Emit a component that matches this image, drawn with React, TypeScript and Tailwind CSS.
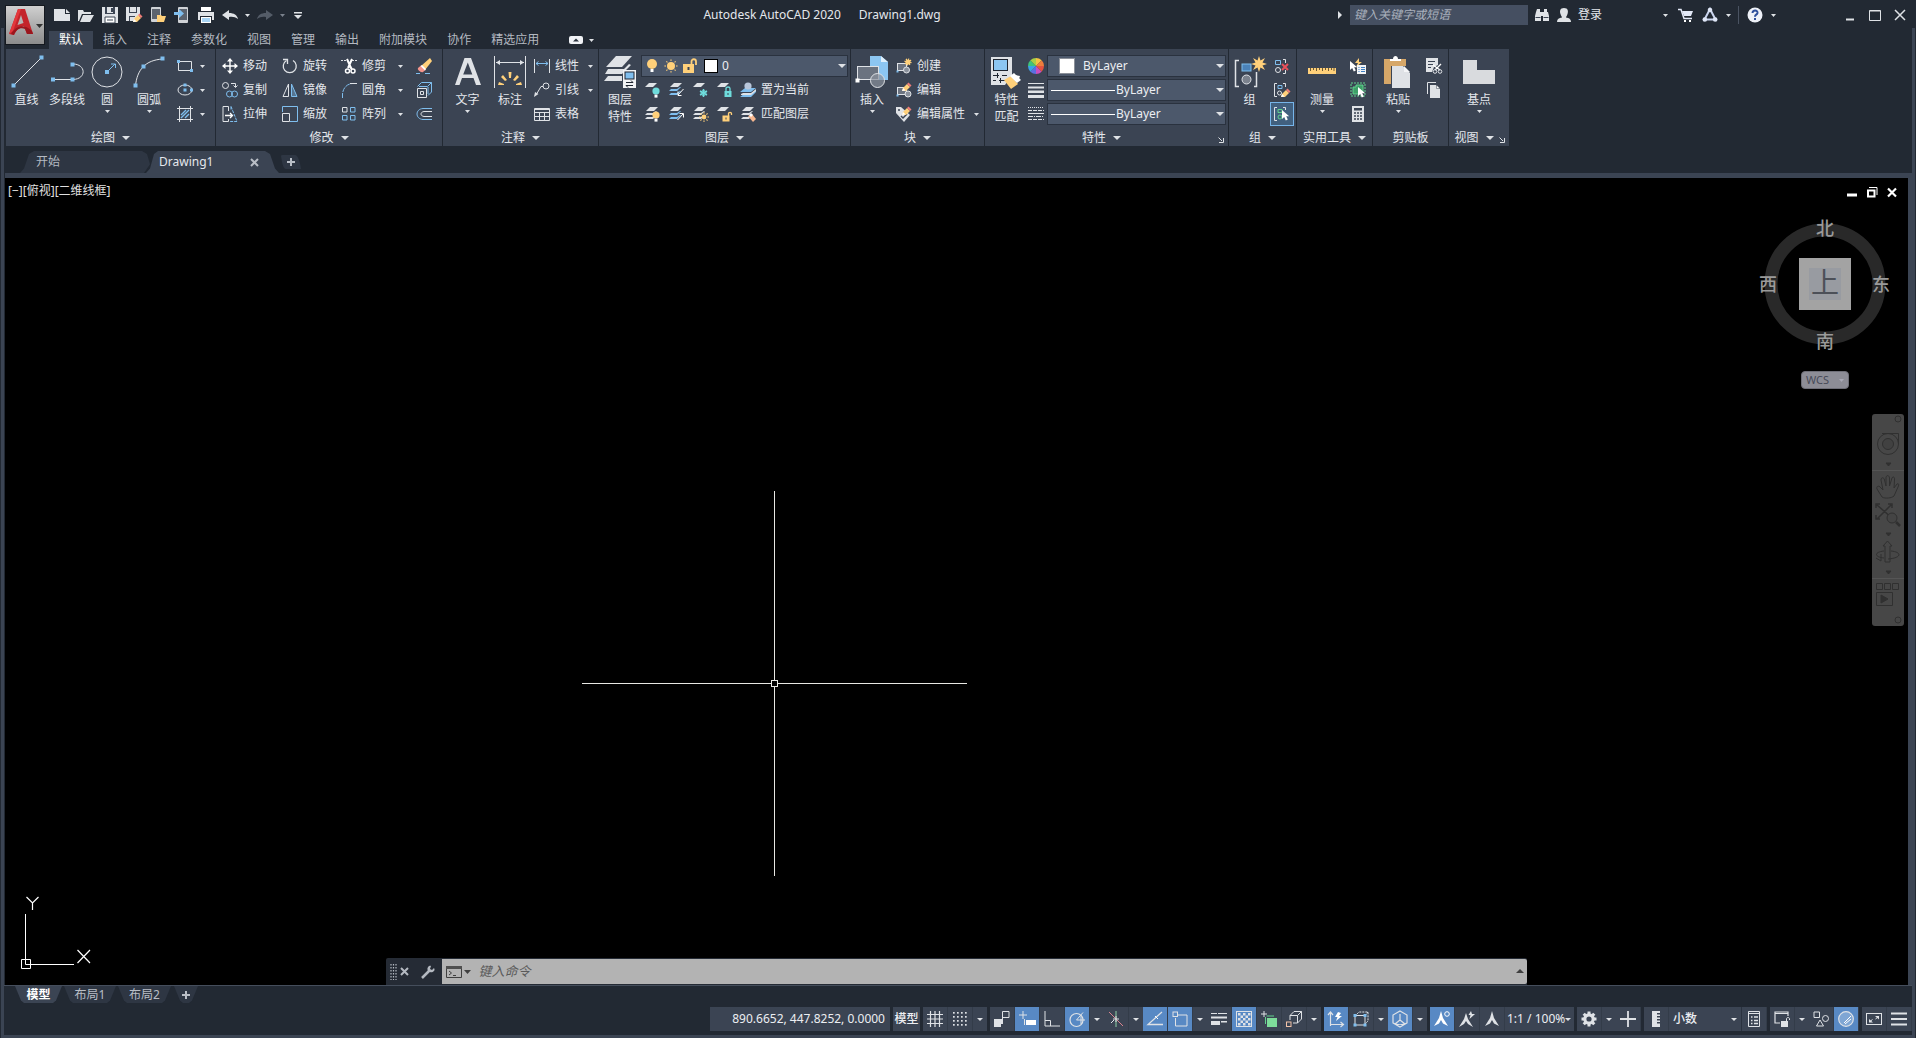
import React from "react";
import type { ReactNode } from "react";

const W = "#dfe2e6";
const B = "#7fbeee";
const Y = "#ffd07a";
const G = "#62d38f";
const T = "#6fdcdc";
const N = "#3b4453";

const dot = (x: number, y: number, s = 3, c = B) => (
  <rect x={x - s / 2} y={y - s / 2} width={s} height={s} fill={c} stroke="none" />
);

const sheet = (y: number, c = W) => <path d={`M1 ${y + 4} L5 ${y} H13 L9 ${y + 4} Z`} fill={c} stroke="none" />;
const layer3 = (c1 = W, c2 = W, c3 = W) => (
  <g stroke="none">
    <path d="M2 5 L6 1 H14 L10 5 Z" fill={c1} />
    <path d="M1 9 L3 7 H9 L12 5 L13 5 L9 9 Z" fill={c2} />
    <path d="M1 13 L3 11 H9 L12 9 L13 9 L9 13 Z" fill={c3} />
  </g>
);
const bulb = (x: number, y: number, r: number, c: string) => (
  <g stroke="none">
    <circle cx={x} cy={y} r={r} fill={c} />
    <rect x={x - 1.5} y={y + r} width="3" height="3" fill="#fff" />
  </g>
);
const cursor = (x: number, y: number) => (
  <path
    d={`M${x} ${y} v9 l2.2 -2 l1.6 3.6 l2 -1 l-1.6 -3.4 h3 Z`}
    fill="#fff"
    stroke="none"
  />
);
const pencil = (x: number, y: number) => (
  <g stroke="none" transform={`translate(${x} ${y})`}>
    <path d="M0 8 L1 5 L5 1 L8 4 L4 8 Z" fill={Y} />
    <path d="M5 1 L6.5 -0.5 L9.5 2.5 L8 4 Z" fill="#ef7c78" />
    <path d="M0 8 L1 5 L3.6 7.6 Z" fill="#fff" />
  </g>
);
const sun = (x: number, y: number, r: number) => (
  <g stroke={Y} strokeWidth="1">
    <circle cx={x} cy={y} r={r} fill={Y} stroke="none" />
    {[0, 45, 90, 135, 180, 225, 270, 315].map((a) => (
      <path key={a} transform={`rotate(${a} ${x} ${y})`} d={`M${x} ${y - r - 1} V${y - r - 2.6}`} />
    ))}
  </g>
);

const icons: Record<string, ReactNode> = {
  /* quick access */
  new: <path d="M0 2 H11 V7 H16 V14 H0 Z M12 2 L16 6 H12 Z" fill={W} stroke="none" />,
  open: <path d="M0 14 V3 H5 L6 5 H13 V7 H4 L1 14 Z M5 8 H16 L12 15 H2 Z" fill={W} stroke="none" />,
  save: (
    <g stroke="none">
      <path d="M0 0 H16 V16 H0 Z" fill={W} />
      <path d="M3 0 H5 V6 H11 V0 H13 V7 H3 Z" fill={N} />
      <rect x="9" y="1" width="2" height="4" fill={N} />
      <path d="M3 10 H13 V16 H3 Z" fill="#fff" stroke={N} />
      <path d="M5 13 H11" stroke={N} />
    </g>
  ),
  saveas: (
    <g stroke="none">
      <path d="M0 0 H14 V9 L8 14 H0 Z" fill={W} />
      <path d="M3 0 H4 V5 H10 V0 H11 V6 H3 Z M3 9 h6 v1 h-5 v4 h-1 Z" fill={N} />
      {pencil(7, 7)}
    </g>
  ),
  mobile: (
    <g stroke="none">
      <rect x="1" y="0" width="10" height="15" rx="1" fill="#cfd2d6" />
      <rect x="2" y="2" width="8" height="10" fill="#5c636e" />
      <path d="M7 8 h4 l1 1 h4 l-2 6 h-7 Z" fill={Y} />
    </g>
  ),
  send: (
    <g stroke="none">
      <rect x="4" y="0" width="10" height="16" rx="1" fill="#cfd2d6" />
      <rect x="5" y="2" width="8" height="11" fill="#5c636e" />
      <path d="M0 5 H5 V2 L10 6.5 L5 11 V8 H0 Z" fill={B} />
    </g>
  ),
  print: (
    <g stroke="none">
      <rect x="3" y="0" width="10" height="4" fill="#fff" />
      <path d="M0 5 H16 V13 H14 V9 H2 V13 H0 Z" fill={W} />
      <rect x="3" y="10" width="10" height="6" fill="#fff" />
      <rect x="4" y="11" width="8" height="4" fill="#a8d4f5" />
    </g>
  ),
  undo: <path d="M0 8 L7 3 V6 C12 6 15 8 16 12 C13 10 11 9.5 7 10 V13 Z" fill={W} stroke="none" />,
  redo: <path d="M16 8 L9 3 V6 C4 6 1 8 0 12 C3 10 5 9.5 9 10 V13 Z" fill="#545c68" stroke="none" />,
  custom: <path d="M4 5 H12 V6.5 H4 Z M4 8 H12 L8 12 Z" fill={W} stroke="none" />,
  /* draw */
  line: (
    <>
      <path d="M3 29 L31 1" />
      {dot(2.5, 29.5, 4)}
      {dot(30.5, 1.5, 4)}
    </>
  ),
  pline: (
    <>
      <path d="M2 23.5 H22 C36 23 35 8 22 8" />
      {dot(2, 23.5, 4)}
      {dot(21.5, 23.5, 4)}
      {dot(21.5, 8.5, 4)}
    </>
  ),
  circle: (
    <>
      <circle cx="16" cy="16" r="15" />
      <path d="M16 16 L24 8 M20 8 h4.500 v4" stroke={B} />
      {dot(16, 16, 4)}
    </>
  ),
  arc: (
    <>
      <path d="M2.500 30 C4 14 12 4 30 3" />
      {dot(2.5, 29.5, 4)}
      {dot(10.5, 10.5, 4)}
      {dot(29.5, 2.5, 4)}
    </>
  ),
  rect: (
    <>
      <path d="M1.500 3.500 H14.500 V12.500 H1.500 Z" />
      {dot(1.5, 3.5)}
      {dot(14.5, 12.5)}
    </>
  ),
  ellipse: (
    <>
      <ellipse cx="8" cy="8" rx="7" ry="5" />
      {dot(8, 8)}
      {dot(14.5, 8)}
      {dot(8, 3)}
    </>
  ),
  hatch: (
    <>
      <path d="M0 2.500 H16 M0 13.500 H16 M2.500 0 V16 M13.500 0 V16" />
      <path d="M4 9 L9 4 M4 12 L12 4 M8 12 L12 8" stroke={B} strokeWidth="1.400" />
    </>
  ),
  /* modify */
  move: <path d="M8 0 L11 3.500 H8.700 V7.300 H12.500 V5 L16 8 L12.500 11 V8.700 H8.700 V12.500 H11 L8 16 L5 12.500 H7.300 V8.700 H3.500 V11 L0 8 L3.500 5 V7.300 H7.300 V3.500 H5 Z" fill="#fff" stroke="none" />,
  rotate: (
    <>
      <path d="M11 2.500 A6.500 6.500 0 1 1 4.500 2.500" strokeWidth="1.300" />
      <path d="M1 1.500 H5.500 V6" strokeWidth="1.300" />
    </>
  ),
  trim: (
    <>
      <path d="M0 2.500 H5 M11 2.500 H16" strokeDasharray="2 1" />
      <path d="M6 1 L10 10 M11 1 L7 10" stroke="#fff" strokeWidth="2" />
      <circle cx="6.500" cy="13" r="2" stroke="#fff" strokeWidth="1.500" />
      <circle cx="12" cy="13" r="2" stroke="#fff" strokeWidth="1.500" />
      <path d="M9 9 L11 11" stroke="#fff" strokeWidth="2" />
    </>
  ),
  erase: (
    <g stroke="none">
      <path d="M5 8 L14 0 L16 3 L9 12 Z" fill={Y} />
      <path d="M2 10 L5 7.500 L9.500 12 L7 14 C5 15 1 12 2 10 Z" fill="#f4958c" />
      <path d="M4.500 8 L6 7 L10 11 L9 12.500 Z" fill="#fff" />
      <path d="M0 15.500 H4 M9 15.500 H14" stroke={B} />
    </g>
  ),
  copy: (
    <>
      <circle cx="3.500" cy="3.500" r="3" />
      <path d="M9 1.500 H13.500 V5 M11.500 3.500 L13.500 5.500 L15.500 3.500" />
      <circle cx="7.500" cy="12" r="3" stroke={B} />
      <circle cx="12.500" cy="12" r="3" stroke={B} />
    </>
  ),
  mirror: (
    <>
      <path d="M6.500 2 V14.500 H1 Z" />
      <path d="M9.500 2 V14.500 H15 Z" stroke={B} fill={B} fillOpacity="0.4" />
    </>
  ),
  fillet: (
    <>
      <path d="M1.500 16 V12 C2 6 6 2 11 1.500" stroke={B} strokeDasharray="5 1" />
      <path d="M9 1.500 H16" />
    </>
  ),
  explode: (
    <>
      <path d="M1.500 6.500 H10.500 V15.500 H1.500 Z" />
      <path d="M1.500 4.500 L5.500 0.500 H15.500 V10 L12 13.500 M15.500 0.500 L11.500 4.500 H3 M12 5 V12" stroke={B} />
      <path d="M4.500 9.500 h3 v3 h-3 Z" />
    </>
  ),
  stretch: (
    <>
      <path d="M1 0.500 H6.500 V5 M6.500 13 V15.500 H1 V0.500" />
      <path d="M9 0.500 L15 15.500 H8 M9 0.500 V4" stroke={B} strokeDasharray="3 1" />
      <path d="M3 9.500 H10 M8 7 L10.500 9.500 L8 12" stroke="#fff" strokeWidth="1.300" />
    </>
  ),
  scale: (
    <>
      <path d="M0.500 6 V0.500 H15.500 V15.500 H8" stroke={B} />
      <path d="M0.500 7.500 H7.500 V15.500 H0.500 Z" />
    </>
  ),
  array: (
    <>
      <path d="M1.500 1.500 h4.500 v4.500 h-4.500 Z" />
      <path d="M9.500 1.500 h4.500 v4.500 h-4.500 Z M1.500 9.500 h4.500 v4.500 h-4.500 Z M9.500 9.500 h4.500 v4.500 h-4.500 Z" stroke={B} />
    </>
  ),
  offset: (
    <>
      <path d="M16 2.500 H7 C-1 3 -1 13 7 13.500 H16" stroke={B} />
      <path d="M16 5.500 H8 C4 6 4 10 8 10.500 H16" />
    </>
  ),
  /* annotate */
  text: <path d="M12.500 2 H19 L29 29 H24 L21.500 22 H10 L7.500 29 H3 Z M15.800 6.500 L11.200 18.500 H20.300 Z" fill={W} fillRule="evenodd" stroke="none" />,
  dim: (
    <>
      <path d="M0.500 0 V32 M31.500 0 V32 M2 6.500 H30" />
      <path d="M2 6.500 l4 -2.500 v5 Z M30 6.500 l-4 -2.500 v5 Z" fill={W} stroke="none" />
      <path d="M4 29 L5 26 L10 28 V29 Z M28 29 L27 26 L22 28 V29 Z M7 21 L9 19 L13 24 L11 25 Z M25 21 L23 19 L19 24 L21 25 Z M14.500 16 H17.500 L17 22 H15 Z" fill={Y} stroke="none" />
    </>
  ),
  linear: (
    <>
      <path d="M0.500 1 V15 M15.500 1 V15" />
      <path d="M2 5.500 H14 M4.500 3.500 L2 5.500 L4.500 7.500 M11.500 3.500 L14 5.500 L11.500 7.500" stroke={B} />
    </>
  ),
  leader: (
    <>
      <circle cx="12" cy="4" r="3" />
      <path d="M9 4.500 H7 L2 13" />
      <path d="M0 15 L1 10 L4.500 12 Z" fill={W} stroke="none" />
    </>
  ),
  table: (
    <>
      <path d="M0.500 2.500 H15.500 V14.500 H0.500 Z M0.500 6.500 H15.500 M0.500 10.500 H15.500 M5.500 6 V14.500 M10.500 6 V14.500" />
      <path d="M1 3.500 H15" />
    </>
  ),
  /* layers */
  layerprops: (
    <g stroke="none">
      <path d="M2 11 L12 0 H28 L18 11 Z" fill={W} />
      <path d="M1 18 L4 13 H20 L25 8 L27 9 L18 18 Z" fill={W} />
      <path d="M0 25 L4 20 H18 V25 Z" fill={W} />
      <rect x="19" y="14" width="13" height="18" fill="#f2f3f5" />
      <rect x="21" y="16" width="9" height="7" fill={B} stroke="#1e2530" />
      <path d="M22 26.500 h7 l-2 -2 M29 29.500 h-7 l2 2" fill="none" stroke="#1e2530" />
    </g>
  ),
  bulb: bulb(8, 6, 5, Y),
  sun: sun(8, 8, 4),
  unlock: (
    <g>
      <path d="M9.500 7 V3.500 C9.500 0.500 14 0.500 14 3.500 V7" stroke={Y} strokeWidth="1.800" />
      <rect x="1" y="6" width="11" height="9" fill={Y} stroke="none" />
      <path d="M6.500 9 v3" stroke={N} strokeWidth="2" />
    </g>
  ),
  loff: <>{sheet(1)}{bulb(12, 9, 3.6, T)}</>,
  liso: <>{layer3(W, B, B)}<path d="M15.500 7 L10 13 M10 9.500 V13.500 H13.500" stroke="#fff" /></>,
  lfreeze: (
    <>
      {sheet(1)}
      <path d="M11.500 7 V15 M8 9 L15 13 M15 9 L8 13" stroke={T} strokeWidth="1.500" />
      <circle cx="11.500" cy="11" r="2.500" stroke={T} />
    </>
  ),
  llock: <>{sheet(1)}<path d="M10 9 V6.500 C10 4.500 14 4.500 14 6.500 V9" stroke={T} strokeWidth="1.300" /><rect x="8.500" y="9" width="7" height="6" fill={T} stroke="none" /><path d="M12 11 v2" stroke={N} /></>,
  lcurrent: (
    <g stroke="none">
      <path d="M0 10 L5 6 H16 L11 10 Z M0 15 L4 12 H11 L16 8 V10 L11 15 Z" fill={B} />
      <path d="M1 12 L3 11 H11 L16 7 V9 L11 13 H1 Z" fill={W} />
      <circle cx="8" cy="4" r="3.600" fill="#b8c6da" />
    </g>
  ),
  lon: <>{layer3()}{bulb(12, 9, 3.6, Y)}</>,
  luniso: <>{layer3(W, B, B)}<path d="M9.500 14 L15 8 M11.500 7.500 H15.500 V11.500" stroke="#fff" /></>,
  lthaw: <>{layer3()}{sun(12, 11, 2.4)}</>,
  lunlock: <>{sheet(1)}<path d="M12.500 10 V7.500 C12.500 6 15.500 6 15.500 7.500 V9" stroke={Y} strokeWidth="1.300" /><rect x="6.500" y="9.500" width="7" height="6" fill={Y} stroke="none" /><path d="M10 11.500 v2" stroke={N} /></>,
  lmatch: <>{layer3()}<path d="M8 10 L12 8 L16 13 L13 16 Z" fill="#f7b78f" stroke="none" /><path d="M9 9 L11 7 L13 9 L11 11 Z" fill="#fff" stroke="none" /></>,
  /* block */
  insert: (
    <>
      <path d="M14 0 H25 L32 6 V24 H14 Z" fill="#8cc6f2" stroke="none" />
      <path d="M25 0 L32 6 H25 Z" fill="#dff0fc" stroke="none" />
      <rect x="1.500" y="10.500" width="21" height="13" fill="#6b7380" />
      <circle cx="21.500" cy="24.500" r="7" fill="#8a919c" fillOpacity="0.7" />
      {dot(1.5, 24.5, 4, "#fff")}
    </>
  ),
  create: (
    <>
      <rect x="1.500" y="5.500" width="9" height="7" fill="#6b7380" />
      <circle cx="10.500" cy="12" r="3" fill="#8a919c" />
      <circle cx="12" cy="4" r="2.600" fill={Y} stroke={Y} strokeDasharray="1 1" strokeWidth="2" />
      {dot(1.5, 13.5, 2)}
    </>
  ),
  bedit: (
    <>
      <rect x="1.500" y="5.500" width="9" height="7" fill="#6b7380" />
      <circle cx="12" cy="12" r="3" fill="#8a919c" />
      {pencil(6, 1)}
      {dot(1.5, 13.5, 2)}
    </>
  ),
  battr: (
    <>
      <path d="M0 1 H5 L14 9 L8 16 L0 7 Z" fill={W} stroke="none" />
      <circle cx="3" cy="4" r="1" fill={N} stroke="none" />
      <path d="M5 10 l2 2 l4 -4" stroke={N} strokeWidth="1.500" />
      {pencil(6, 1)}
    </>
  ),
  /* properties */
  match: (
    <g stroke="none">
      <path d="M0 1 H21 V19 L14 29 H0 Z" fill={W} />
      <rect x="2.500" y="3.500" width="14" height="11" fill="#8cc6f2" stroke="#1e2530" />
      <path d="M2 19.500 H8 M11 19.500 H16 M2 24.500 H5 M8 24.500 H14 M6.500 17 v5 M9.500 22 v5" stroke="#1e2530" />
      <path d="M13 24 L20 20 L27 28 L20 33 Z" fill={Y} />
      <path d="M19 20 L23 17 L30 24 L26 27 Z" fill="#fff" />
      <path d="M24 19 L29 20 L28 23 Z" fill="#fff" />
    </g>
  ),
  wheel: (
    <g stroke="none">
      {["#f5c242", "#ef7d3c", "#e5533f", "#c94fc0", "#5b6fe0", "#3ba2e8", "#3fc37a", "#a9cf45"].map((c, i) => (
        <path key={c} d="M8 8 L8 0 A8 8 0 0 1 13.660 2.340 Z" fill={c} transform={`rotate(${i * 45} 8 8)`} />
      ))}
    </g>
  ),
  weight: <path d="M0 1 H16 V2 H0 Z M0 4.500 H16 V6.500 H0 Z M0 8.500 H16 V11 H0 Z M0 13 H16 V16 H0 Z" fill={W} stroke="none" />,
  ltype: (
    <>
      <path d="M0 1.500 H16" strokeDasharray="1 1" />
      <path d="M0 4.500 H16 M0 13.500 H16" strokeDasharray="4 1" />
      <path d="M0 7.500 H16" />
      <path d="M0 10.500 H16" strokeDasharray="5 1 1 1" />
    </>
  ),
  /* group */
  group: (
    <>
      <path d="M5 4.500 H1.500 V30.500 H5 M20 30.500 H22.500 V16" strokeWidth="1.500" />
      <rect x="8" y="8" width="9" height="7" fill="#4b82b8" stroke={B} />
      <circle cx="12.500" cy="23.500" r="4.500" fill="#7b828d" />
      <path d="M25 0 L26.500 4.500 L31 2 L28.500 6.500 L33 8 L28.500 9.500 L31 14 L26.500 11.500 L25 16 L23.500 11.500 L19 14 L21.500 9.500 L17 8 L21.500 6.500 L19 2 L23.500 4.500 Z" fill={Y} stroke="none" />
    </>
  ),
  ungroup: (
    <>
      <path d="M1.500 2.500 h5 v4 h-5 Z" stroke={B} />
      <circle cx="4" cy="12" r="2.500" />
      <path d="M9 1.500 H11.500 V5 M11.500 12 V15.500 H9" />
      <path d="M8 6 L14 12 M14 6 L8 12" stroke="#e8505b" strokeWidth="2" />
    </>
  ),
  groupedit: (
    <>
      <path d="M3 1.500 H0.500 V14.500 H3 M9 1.500 H11.500 V5" />
      <path d="M4 3.500 h4 v3 h-4 Z" stroke={B} />
      <circle cx="5.500" cy="11" r="2" />
      {pencil(7, 7)}
    </>
  ),
  groupsel: (
    <>
      <path d="M3 1.500 H0.500 V14.500 H3 M9 1.500 H11.500 V4" />
      <path d="M4 3.500 h4 v3 h-4 Z" stroke={G} />
      <circle cx="6" cy="11" r="2" stroke={G} />
      {cursor(8, 4)}
    </>
  ),
  /* utilities */
  measure: (
    <g stroke="none">
      <rect x="2" y="12" width="28" height="6" fill={Y} />
      <path d="M4.500 12 v3 M7.500 12 v2 M10.500 12 v3 M13.500 12 v2 M16.500 12 v3 M19.500 12 v2 M22.500 12 v3 M25.500 12 v2 M28 12 v3" stroke="#6b5a35" />
    </g>
  ),
  qselect: (
    <>
      <path d="M9 0 L5 5 H8 L6 9 L12 4 H9 Z" fill={Y} stroke="none" />
      <rect x="7" y="7" width="9" height="9" fill="#f2f3f5" stroke="none" />
      <path d="M8.500 9.500 h1 M11 9.500 h4 M8.500 11.500 h1 M11 11.500 h4 M8.500 13.500 h1 M11 13.500 h4" stroke="#3f7fc0" />
      {cursor(0, 3)}
    </>
  ),
  selall: (
    <>
      <rect x="1" y="1" width="14" height="13" stroke={G} strokeDasharray="2 1" />
      <path d="M3 5 H6 V3 H13 V10 H10 V12 H3 Z" fill="#3e9f68" stroke={G} />
      {cursor(8, 5)}
    </>
  ),
  calc: (
    <g stroke="none">
      <rect x="2" y="0" width="12" height="16" fill={W} />
      <rect x="4" y="2" width="8" height="2.500" fill={N} />
      {[7, 10, 13].map((y) => (
        <path key={y} d={`M4 ${y} h2 M7 ${y} h2 M10 ${y} h2`} stroke={N} strokeWidth="1.500" />
      ))}
    </g>
  ),
  /* clipboard */
  paste: (
    <g stroke="none">
      <path d="M2 3 H24 V10 H9 V28 H2 Z" fill="#d6a768" />
      <path d="M8 3 H11 C11 -1 16 -1 16 3 H19 V5 H8 Z" fill="#fff" />
      <path d="M10 10 H21 L28 17 V32 H10 Z" fill={W} />
      <path d="M22 10 L28 16 H22 Z" fill="#f4f5f7" />
    </g>
  ),
  cut: (
    <>
      <path d="M0 0 H12 V7 L8 9 L6 14 H0 Z" fill={W} stroke="none" />
      <path d="M2 3.500 H9 M2 6.500 H7 M2 9.500 H5" stroke={N} />
      <path d="M7 7 L14 12 M15 6 L9 12" stroke="#fff" strokeWidth="1.300" />
      <circle cx="9" cy="13.500" r="1.800" />
      <circle cx="14" cy="13.500" r="1.800" />
    </>
  ),
  copyclip: (
    <>
      <path d="M1.500 12 V0.500 H10" />
      <path d="M4 3 H10 L14 7 V16 H4 Z" fill={W} stroke="none" />
      <path d="M10.500 3 L14 6.500 H10.500 Z" fill="#fff" stroke={N} strokeWidth="0.500" />
    </>
  ),
  base: <path d="M0 4 H14 V14 H32 V28 H0 Z" fill="#d9dbde" stroke="none" />,
  /* title right */
  find: (
    <g fill={W} stroke="none">
      <path d="M3 2 H6 V5 H7 V14 H1 V9 L2 5 Z M10 2 H13 V5 L14 5 L15 9 V14 H9 V5 H10 Z" />
      <rect x="7" y="5" width="2" height="4" />
      <path d="M1.500 10.500 H6.500 M9.500 10.500 H14.500" stroke={N} />
    </g>
  ),
  user: <path d="M8 1 C12 1 12.500 4 11.500 7 C11 9 10 9.500 10 10.500 C13 11 15 12 15 15 H1 C1 12 3 11 6 10.500 C6 9.500 5 9 4.500 7 C3.500 4 4 1 8 1 Z" fill={W} stroke="none" />,
  cart: (
    <>
      <path d="M0 2.500 H3 L6 11.500 H14" stroke="#e3e9f8" strokeWidth="1.500" />
      <path d="M4 4 H15 L13 9 H6 Z" fill="#e3e9f8" stroke="none" />
      <rect x="6" y="13" width="2" height="2" fill="#fff" stroke="none" />
      <rect x="11" y="13" width="2" height="2" fill="#fff" stroke="none" />
    </>
  ),
  a360: (
    <>
      <path d="M8 2 L2.500 12.500 H13.500 Z" stroke="#c9d4ee" strokeWidth="2" />
      <circle cx="8" cy="3" r="2.300" fill="#dfe6f7" stroke="none" />
      <circle cx="2.800" cy="12.500" r="2.300" fill="#dfe6f7" stroke="none" />
      <circle cx="13.200" cy="12.500" r="2.300" fill="#dfe6f7" stroke="none" />
    </>
  ),
  help: (
    <>
      <circle cx="8" cy="8" r="7.500" fill="#eef1f8" stroke="none" />
      <path d="M5.500 6 C5.500 2.500 11 3 10.500 6 C10 8 8 7.500 8 9.800" stroke="#2d4f9c" strokeWidth="2" />
      <rect x="7" y="11" width="2" height="2" fill="#2d4f9c" stroke="none" />
    </>
  ),
  /* status */
  grid: <path d="M0 3.500 H16 M0 8 H16 M0 12.500 H16 M3.500 0 V16 M8 0 V16 M12.500 0 V16" strokeWidth="1.200" />,
  snap: (
    <g stroke="none" fill={W}>
      {[2, 6, 10, 14].map((y) => [2, 6, 10, 14].map((x) => <rect key={`${x}-${y}`} x={x - 1} y={y - 1} width="1.700" height="1.700" />))}
    </g>
  ),
  infer: (
    <>
      <path d="M8.500 10 V0.500 H15 V6.500 H9" />
      <path d="M0 8 H9 V13 H7 V16 H0 Z" fill={W} stroke="none" />
    </>
  ),
  dyn: (
    <>
      <path d="M4 0 V8 M0 4 H8" />
      <rect x="7" y="9" width="10" height="5" fill="#fff" stroke="none" />
      <path d="M5.500 8 V14" />
    </>
  ),
  ortho: <path d="M1 0 V15 H16 M1 9.500 H6.500 V15" />,
  polar: (
    <>
      <circle cx="7.500" cy="9" r="6.500" strokeWidth="1.200" />
      <path d="M7.500 9 L14 1.500 M7.500 9 H16 M12 5 V13" />
    </>
  ),
  iso: (
    <>
      <path d="M8 0 V16" stroke="#8fd0a6" />
      <path d="M1 1 L15 15" stroke="#d9838f" />
      <path d="M5 8 H11 M8 5 V11 M3 12 L6 9" stroke={W} />
    </>
  ),
  otrack: (
    <>
      <path d="M15 1 L1 13.500 H16" strokeWidth="1.300" />
      <path d="M8 5 l3 3" stroke="#fff" />
    </>
  ),
  osnap: (
    <>
      <path d="M6 4 H15 V15 H3.500 V7" />
      <rect x="1" y="1" width="4.500" height="4.500" />
    </>
  ),
  lwdisp: (
    <g stroke="none" fill={W}>
      <path d="M0 2 h6 v1 H0 Z M7 2 h9 v1 H7 Z M0 5.500 h16 v2 H0 Z M0 10 h9 v4 H0 Z M10 10 h6 v1.500 h-6 Z" />
    </g>
  ),
  transp: (
    <>
      <rect x="0.500" y="0.500" width="15" height="15" />
      <g fill={W} stroke="none">
        {[0, 1, 2, 3, 4].map((r) => [0, 1, 2, 3, 4].map((c) => (r + c) % 2 === 0 && (
          <rect key={`${r}-${c}`} x={2 + c * 2.5} y={2 + r * 2.5} width="2.500" height="2.500" />
        )))}
      </g>
    </>
  ),
  cycle: (
    <>
      <path d="M3 0 V6 M0 3 H6" />
      <path d="M5.500 5 H13 M4.500 6 V13" stroke={G} />
      <rect x="6" y="7" width="10" height="9" fill="#7ddc9a" stroke="none" />
    </>
  ),
  osnap3d: (
    <>
      <path d="M4 9 V4.500 L8 0.500 H15.500 V8 L11.500 12 H7 M4 4.500 H11.500 V12 M11.500 4.500 L15.500 0.500" />
      <rect x="0.500" y="11" width="4.500" height="4.500" stroke="#f2c2a8" />
    </>
  ),
  ducs: (
    <>
      <path d="M2.500 15 V2 M0 4 L2.500 1 L5 4 M2.500 13.500 H15 M12.500 11 L15.500 13.500 L12.500 16" strokeWidth="1.200" />
      <path d="M10 1 L7 6 H9.500 L8 10 L14 5 H11 L13 2 Z" fill="#fff" stroke="none" />
    </>
  ),
  subobj: (
    <>
      <path d="M2 5 L6 1 H15 V10 L12 13 M12 4.500 L15 1" strokeDasharray="2 1" />
      <path d="M2 4.500 H12 V14 H2 Z" />
      {dot(2, 4.5)}
      {dot(12, 4.5)}
      {dot(2, 14)}
      {dot(12, 14)}
    </>
  ),
  gizmo: (
    <>
      <path d="M8 0 L15 4 V12 L8 16 L1 12 V4 Z M8 3 V9 L3 13 M8 9 L13 13 M1 12 C5 14 11 14 15 12" strokeWidth="1.200" />
    </>
  ),
  ann1: (
    <>
      <path d="M7 0 L9 7 L14 15 L9 12.500 L7 9 L5 12.500 L0 15 L5 7 Z" fill="#fff" stroke="none" />
      <circle cx="13" cy="3" r="2.300" stroke="#fff" />
    </>
  ),
  ann2: (
    <g stroke="none" fill={W}>
      <path d="M7 2 L9 8 L14 16 L9 13 L7 10 L5 13 L0 16 L5 8 Z" />
      <path d="M12 0 L9.500 4 H11.500 L10.500 8 L16 3 H13 Z" />
    </g>
  ),
  ann3: <path d="M8 0 L10 7 L15 15 L10 12.500 L8 9 L6 12.500 L1 15 L6 7 Z" fill={W} stroke="none" />,
  gear: (
    <>
      <circle cx="8" cy="8" r="4.200" strokeWidth="3.200" />
      {[0, 45, 90, 135, 180, 225, 270, 315].map((a) => (
        <path key={a} transform={`rotate(${a} 8 8)`} d="M8 0.500 V4" strokeWidth="3" />
      ))}
    </>
  ),
  plus: <path d="M8 0 V16 M0 8 H16" strokeWidth="1.800" />,
  ruler: <path d="M4 0 H12 V2 H9 V3.500 H12 V5 H9 V6.500 H12 V8 H9 V9.500 H12 V11 H9 V12.500 H12 V16 H4 Z" fill={W} stroke="none" />,
  qprops: (
    <>
      <path d="M2.500 0.500 H13.500 V15.500 H2.500 Z M2.500 2.500 H13.500" />
      <path d="M5 6 h1.500 M8 6 h4 M5 9.500 h1.500 M8 9.500 h4 M5 12.500 h1.500 M8 12.500 h4" strokeWidth="1.300" />
    </>
  ),
  lockui: (
    <>
      <path d="M6 12 H1 V1 H14 V5 M1 2.500 H14" strokeWidth="1.200" />
      <path d="M12.500 10 V8 C12.500 6 15.500 6 15.500 8 V9" />
      <rect x="7" y="10" width="7" height="6" fill={W} stroke="none" />
    </>
  ),
  isolate: (
    <>
      <path d="M1 1 h5.500 v5.500 h-5.500 Z M7 9 L10.500 15 H3.500 Z" />
      <circle cx="12.500" cy="7.500" r="3" />
    </>
  ),
  hw: (
    <>
      <circle cx="8" cy="8" r="7.300" strokeWidth="1.200" fill="#7fa6d4" />
      <path d="M6 12 L13 5 M7 13 L13 8" stroke="#fff" />
    </>
  ),
  clean: (
    <>
      <rect x="0.500" y="2.500" width="15" height="11" />
      <path d="M9 5 H13 V8.500 Z M7 11.500 H3 V8 Z" fill={W} stroke="none" />
      <path d="M12 6 L9.500 8 M4 10.500 L6.500 8.500" />
    </>
  ),
  menu: <path d="M0 2.500 H16 M0 8 H16 M0 13.500 H16" strokeWidth="2" />,
};

function Icon({ name, size = 16 }: { name: string; size?: number }) {
  return (
    <svg
      width={size}
      height={size}
      viewBox={`0 0 ${size} ${size}`}
      fill="none"
      stroke={W}
      strokeWidth={1}
      className="shrink-0 overflow-visible"
      aria-hidden="true"
    >
      {icons[name]}
    </svg>
  );
}

function Caret({ size = 5, color = W }: { size?: number; color?: string }) {
  return (
    <svg width={size} height={Math.ceil(size / 2)} viewBox="0 0 8 4" preserveAspectRatio="none" className="shrink-0" aria-hidden="true">
      <path d="M0 0 H8 L4 4 Z" fill={color} />
    </svg>
  );
}

const quick: [string, string][] = [
  ["new", "新建"],
  ["open", "打开"],
  ["save", "保存"],
  ["saveas", "另存为"],
  ["mobile", "从 Web 和 Mobile 中打开"],
  ["send", "保存到 Web 和 Mobile"],
  ["print", "打印"],
  ["undo", "放弃"],
];

function IconButton({ icon, label, className = "w-6" }: { icon: string; label: string; className?: string }) {
  return (
    <button type="button" aria-label={label} className={`flex h-6 shrink-0 items-center justify-center ${className}`}>
      <Icon name={icon} />
    </button>
  );
}

function CaretButton({ label, dim = false, className = "w-3" }: { label: string; dim?: boolean; className?: string }) {
  return (
    <button type="button" aria-label={label} className={`flex h-6 shrink-0 items-center justify-center ${className}`}>
      <Caret color={dim ? "#7b828d" : W} />
    </button>
  );
}

function TitleBar() {
  return (
    <header className="flex h-7 shrink-0 items-center pt-0.5 pl-[50px]">
      {quick.map(([icon, label]) => (
        <IconButton key={icon} icon={icon} label={label} />
      ))}
      <CaretButton label="放弃列表" className="w-[11px]" />
      <IconButton icon="redo" label="重做" />
      <CaretButton label="重做列表" dim className="w-[11px]" />
      <IconButton icon="custom" label="自定义快速访问工具栏" className="w-5" />
      <h1 className="flex flex-1 justify-center gap-[18px] whitespace-pre text-[#e4e7ec]">
        <span>Autodesk AutoCAD 2020</span>
        <span>Drawing1.dwg</span>
      </h1>
      <button type="button" aria-label="收拢搜索" className="mr-1.5 flex h-6 w-2 items-center justify-center">
        <svg width="4" height="8" viewBox="0 0 4 8" aria-hidden="true"><path d="M0 0 L4 4 L0 8 Z" fill={W} /></svg>
      </button>
      <input
        type="text"
        aria-label="搜索"
        placeholder="键入关键字或短语"
        className="h-5 w-[178px] bg-[#454f61] px-1 pb-0.5 text-xs italic outline-none placeholder:text-[#aab1bd]"
      />
      <IconButton icon="find" label="搜索" className="ml-0.5 w-6" />
      <button type="button" className="flex w-[114px] items-center gap-1.5 pl-0.5 text-[#e4e7ec]">
        <Icon name="user" />
        <span className="flex-1 text-left">登录</span>
        <Caret />
      </button>
      <IconButton icon="cart" label="Autodesk App Store" className="ml-1.5 w-6" />
      <IconButton icon="a360" label="保持连接" />
      <CaretButton label="保持连接菜单" />
      <span className="mx-1 h-[18px] w-px bg-[#4a5362]" />
      <IconButton icon="help" label="帮助" />
      <CaretButton label="帮助菜单" />
      <div className="ml-[58px] flex shrink-0 pr-1">
        <button type="button" aria-label="最小化" className="flex h-6 w-[25px] items-center justify-center">
          <svg width="12" height="12" aria-hidden="true"><path d="M2 10.500 H10" stroke={W} strokeWidth="2" /></svg>
        </button>
        <button type="button" aria-label="最大化" className="flex h-6 w-[25px] items-center justify-center">
          <svg width="12" height="12" fill="none" aria-hidden="true"><path d="M0.500 1.500 H11.500 V11.500 H0.500 Z M0.500 2 H11.500" stroke={W} /></svg>
        </button>
        <button type="button" aria-label="关闭" className="flex h-6 w-[25px] items-center justify-center">
          <svg width="12" height="12" fill="none" aria-hidden="true"><path d="M1 1 L11 11 M11 1 L1 11" stroke={W} strokeWidth="1.500" /></svg>
        </button>
      </div>
    </header>
  );
}

function AppButton() {
  return (
    <button
      type="button"
      aria-label="应用程序菜单"
      className="absolute top-[5px] left-[5px] z-10 flex h-10 w-10 items-center justify-center border border-[#15191f] bg-linear-to-b from-[#d0d0d0] to-[#8c8c8c]"
    >
      <svg width="36" height="36" viewBox="0 0 36 36" aria-hidden="true">
        <path d="M2 27 L11 2 H18 L26 27 H20 L17 19 C13 20 9 23 7 28 Z" fill="#c4242b" />
        <path d="M14 8 L10.500 18 L16.500 16 Z" fill="#b5b5b5" />
        <path d="M2 27 L11 2 H14 L6 24 Z" fill="#e2373c" />
        <path d="M4 27 C9 19 16 16 25 24 L26 27 H20 L18 22 C13 20 9 23 7 28 Z" fill="#9b161d" />
        <path d="M29 17 H36 L32.500 21 Z" fill="#333" />
      </svg>
    </button>
  );
}

const ribbonTabs = ["默认", "插入", "注释", "参数化", "视图", "管理", "输出", "附加模块", "协作", "精选应用"];

function RibbonTabs() {
  return (
    <nav className="flex h-[21px] items-end pl-[45px]" role="tablist">
      {ribbonTabs.map((t, i) => (
        <button
          key={t}
          type="button"
          role="tab"
          aria-selected={i === 0}
          className={`h-[18px] px-2.5 leading-[18px] ${i === 0 ? "bg-[#3b4453] text-white" : "text-[#b4b9c1]"}`}
        >
          {t}
        </button>
      ))}
      <button type="button" aria-label="最小化功能区" className="ml-5 flex h-[18px] items-center gap-1.5">
        <svg width="14" height="8" aria-hidden="true"><rect width="14" height="8" rx="2" fill="#f0f2f6" /><path d="M4 5.500 H10 L7 2.500 Z" fill="#2a313c" /></svg>
        <Caret />
      </button>
    </nav>
  );
}

function Panel({ title, className, children, arrow = true, launcher = false }: {
  title: string; className: string; children: ReactNode; arrow?: boolean; launcher?: boolean;
}) {
  return (
    <section className={`mr-px flex shrink-0 flex-col bg-[#3b4453] pt-[5px] ${className}`}>
      <div className="flex h-[72px]">{children}</div>
      <div className="flex h-5 items-center pt-[3px]">
        <button type="button" className="flex flex-1 items-center justify-center gap-[7px]">
          {title}
          {arrow && <Caret size={8} />}
        </button>
        {launcher && (
          <button type="button" aria-label={`${title}设置`} className="pt-1 pr-1">
            <svg width="6" height="6" fill="none" aria-hidden="true"><path d="M0.500 0.500 L4 4 M5.500 1 V5.500 H1" stroke={W} /></svg>
          </button>
        )}
      </div>
    </section>
  );
}

function Large({ icon, label, className, arrow = false }: { icon: string; label: string[]; className: string; arrow?: boolean }) {
  return (
    <button type="button" className={`flex shrink-0 flex-col items-center pt-0.5 ${className}`}>
      <Icon name={icon} size={32} />
      <span className="mt-[3px] flex flex-col leading-[17px]">
        {label.map((l) => (
          <span key={l}>{l}</span>
        ))}
      </span>
      {arrow && <span className="mt-0.5"><Caret /></span>}
    </button>
  );
}

function Small({ icon, label, text, arrow = false }: { icon: string; label?: string; text?: string; arrow?: boolean }) {
  return (
    <div className="flex h-6 items-center">
      <button type="button" aria-label={text ?? label} className="flex items-center gap-[5px]">
        <Icon name={icon} />
        {text && <span>{text}</span>}
      </button>
      {arrow && (
        <button type="button" aria-label={`${text ?? label}选项`} className={text ? "ml-auto flex w-4 justify-center" : "ml-px flex w-4 justify-center"}>
          <Caret />
        </button>
      )}
    </div>
  );
}

function Combo({ label, value, before }: { label: string; value: string; before: ReactNode }) {
  return (
    <div className="flex h-[22px] items-center border border-[#2a323f] bg-[#4c586b]">
      {before}
      <select aria-label={label} className="min-w-0 flex-1 appearance-none bg-transparent leading-4 text-[#eceef2] outline-none">
        <option>{value}</option>
      </select>
      <span className="pr-px"><Caret size={8} /></span>
    </div>
  );
}

const lineSample = <span className="mr-px ml-[3px] h-px w-16 bg-white" />;

function Ribbon() {
  return (
    <div className="ml-0.5 flex h-[97px] shrink-0 text-[#e4e7ec]">
      <Panel title="绘图" className="w-[209px]">
        <Large icon="line" label={["直线"]} className="w-[41px]" />
        <Large icon="pline" label={["多段线"]} className="w-10" />
        <Large icon="circle" label={["圆"]} className="w-10" arrow />
        <Large icon="arc" label={["圆弧"]} className="w-11" arrow />
        <div className="pl-1.5">
          <Small icon="rect" label="矩形" arrow />
          <Small icon="ellipse" label="椭圆" arrow />
          <Small icon="hatch" label="图案填充" arrow />
        </div>
      </Panel>
      <Panel title="修改" className="w-[226px]">
        <div className="box-content w-[60px] shrink-0 pl-1.5">
          <Small icon="move" text="移动" />
          <Small icon="copy" text="复制" />
          <Small icon="stretch" text="拉伸" />
        </div>
        <div className="w-[59px] shrink-0">
          <Small icon="rotate" text="旋转" />
          <Small icon="mirror" text="镜像" />
          <Small icon="scale" text="缩放" />
        </div>
        <div className="w-[67px] shrink-0">
          <Small icon="trim" text="修剪" arrow />
          <Small icon="fillet" text="圆角" arrow />
          <Small icon="array" text="阵列" arrow />
        </div>
        <div className="pl-2">
          <Small icon="erase" label="删除" />
          <Small icon="explode" label="分解" />
          <Small icon="offset" label="偏移" />
        </div>
      </Panel>
      <Panel title="注释" className="w-[155px]">
        <Large icon="text" label={["文字"]} className="w-[49px]" arrow />
        <Large icon="dim" label={["标注"]} className="w-9" />
        <div className="flex-1 pl-1.5">
          <Small icon="linear" text="线性" arrow />
          <Small icon="leader" text="引线" arrow />
          <Small icon="table" text="表格" />
        </div>
      </Panel>
      <Panel title="图层" className="w-[251px]">
        <Large icon="layerprops" label={["图层", "特性"]} className="w-[42px]" />
        <div className="flex flex-1 flex-col pr-0.5">
          <div className="flex h-6 flex-col justify-center">
            <Combo
              label="图层"
              value="0"
              before={
                <span className="flex items-center gap-[3px] px-0.5">
                  <Icon name="bulb" />
                  <Icon name="sun" />
                  <Icon name="unlock" />
                  <span className="mr-0.5 ml-[3px] h-3.5 w-3.5 border border-black bg-white" />
                </span>
              }
            />
          </div>
          <div className="flex gap-2 pl-[3px]">
            <Small icon="loff" label="关" />
            <Small icon="liso" label="隔离" />
            <Small icon="lfreeze" label="冻结" />
            <Small icon="llock" label="锁定" />
            <Small icon="lcurrent" text="置为当前" />
          </div>
          <div className="flex gap-2 pl-[3px]">
            <Small icon="lon" label="打开所有图层" />
            <Small icon="luniso" label="取消隔离" />
            <Small icon="lthaw" label="解冻所有图层" />
            <Small icon="lunlock" label="解锁" />
            <Small icon="lmatch" text="匹配图层" />
          </div>
        </div>
      </Panel>
      <Panel title="块" className="w-[133px]">
        <Large icon="insert" label={["插入"]} className="w-[42px]" arrow />
        <div className="flex-1 pl-[3px]">
          <Small icon="create" text="创建" />
          <Small icon="bedit" text="编辑" />
          <Small icon="battr" text="编辑属性" arrow />
        </div>
      </Panel>
      <Panel title="特性" className="w-[243px]" launcher>
        <Large icon="match" label={["特性", "匹配"]} className="w-[43px]" />
        <div className="w-[19px] shrink-0">
          <Small icon="wheel" label="对象颜色" />
          <Small icon="weight" label="线宽" />
          <Small icon="ltype" label="线型" />
        </div>
        <div className="flex flex-1 flex-col gap-0.5 pt-px pr-0.5">
          <Combo label="对象颜色" value="ByLayer" before={<span className="mr-2 ml-[11px] h-4 w-4 border border-[#8a8f98] bg-white" />} />
          <Combo label="线宽" value="ByLayer" before={lineSample} />
          <Combo label="线型" value="ByLayer" before={lineSample} />
        </div>
      </Panel>
      <Panel title="组" className="w-[67px]">
        <Large icon="group" label={["组"]} className="w-[41px]" />
        <div className="flex flex-col">
          <span className="flex h-6 w-6 justify-center"><Small icon="ungroup" label="解除编组" /></span>
          <span className="flex h-6 w-6 justify-center"><Small icon="groupedit" label="组编辑" /></span>
          <span className="flex h-6 w-6 items-center justify-center border border-[#76b5ea] bg-[#41607f]"><Small icon="groupsel" label="启用组选择" /></span>
        </div>
      </Panel>
      <Panel title="实用工具" className="w-[75px]">
        <Large icon="measure" label={["测量"]} className="w-[50px]" arrow />
        <div className="pl-[3px]">
          <Small icon="qselect" label="快速选择" />
          <Small icon="selall" label="全部选择" />
          <Small icon="calc" label="快速计算器" />
        </div>
      </Panel>
      <Panel title="剪贴板" className="w-[75px]" arrow={false}>
        <Large icon="paste" label={["粘贴"]} className="w-[50px]" arrow />
        <div className="pl-[3px]">
          <Small icon="cut" label="剪切" />
          <Small icon="copyclip" label="复制剪裁" />
        </div>
      </Panel>
      <Panel title="视图" className="w-[60px]" launcher>
        <Large icon="base" label={["基点"]} className="w-[60px]" arrow />
      </Panel>
    </div>
  );
}

function DocTabs() {
  return (
    <div className="mt-[5px] flex h-[22px] shrink-0 items-stretch pl-4 text-[#e4e7ec]" role="tablist">
      <button
        type="button"
        role="tab"
        aria-selected={false}
        className="w-[130px] bg-[#2e3643] pl-4 text-left text-[#b4b9c1] [clip-path:polygon(0_100%,4px_80%,9px_14%,14px_0,122px_0,127px_14%,130px_60%,124px_100%)]"
      >
        开始
      </button>
      <div className="-ml-1 flex w-[133px] items-center bg-[#3b4453] pl-[13px] [clip-path:polygon(0_100%,4px_80%,8px_14%,12px_0,119px_0,124px_14%,129px_80%,133px_100%)]">
        <button type="button" role="tab" aria-selected="true">Drawing1</button>
        <button type="button" aria-label="关闭 Drawing1" className="mr-5 ml-auto">
          <svg width="9" height="9" aria-hidden="true"><path d="M1 1 L8 8 M8 1 L1 8" stroke="#b9bec6" strokeWidth="2" /></svg>
        </button>
      </div>
      <button type="button" aria-label="新图形" className="flex w-6 items-center justify-center">
        <svg width="22" height="16" aria-hidden="true">
          <path d="M1 2 C1 1 2 1 3 1 H15 C18 1 20 8 21 15 H6 C3 15 2 8 1 2 Z" fill="#2e3643" />
          <path d="M11 4 V12 M7 8 H15" stroke="#b9bec6" strokeWidth="2" />
        </svg>
      </button>
    </div>
  );
}

function ViewCube() {
  return (
    <div className="absolute top-[35px] right-[10px] flex w-[146px] flex-col items-center font-medium text-[#9a9a9a]">
      <div className="relative flex h-[142px] w-[146px] items-center justify-center text-lg leading-none">
        <svg className="absolute" width="122" height="122" fill="none" aria-hidden="true">
          <circle cx="61" cy="61" r="54" stroke="#292929" strokeWidth="13" />
        </svg>
        <button type="button" className="absolute top-1.5">北</button>
        <button type="button" className="absolute bottom-[5px]">南</button>
        <button type="button" className="absolute left-[7px]">西</button>
        <button type="button" className="absolute right-2">东</button>
        <button type="button" className="relative flex h-[52px] w-[52px] items-center justify-center bg-[#a3a3a3]">
          <span className="flex h-8 w-8 items-center justify-center bg-[#989ba1] pb-1 text-[28px] font-normal text-[#4c5058]">上</span>
        </button>
      </div>
      <button type="button" className="mt-4 flex h-[18px] w-12 items-center justify-between rounded-[4px] border border-[#6f6f78] bg-[#8d8d96] px-1 text-[11px] font-normal text-[#474a58]">
        WCS
        <Caret color="#a9a9b6" />
      </button>
    </div>
  );
}

function NavBar() {
  return (
    <div className="absolute top-[236px] right-1 flex h-[212px] w-8 flex-col items-center rounded-[3px] bg-[#474747]">
      <svg width="32" height="212" fill="none" stroke="#303030" aria-hidden="true">
        <circle cx="26" cy="5" r="3" />
        <circle cx="16" cy="30" r="10.500" />
        <circle cx="16" cy="30" r="5.500" fill="#414141" />
        <path d="M10 19.500 H26.500 V30" />
        <path d="M14 49 H19 L16.500 52 Z" fill="#303030" />
        <path d="M0 56.500 H32" stroke="#555" />
        <path d="M10 83 L5 75 C4 72 7 71 9 74 L11 76 L9 66 C9 63 12 63 12.500 66 L14 72 L14 63 C15 61 17 61 17.500 64 V72 L20 64 C21 62 23 63 22.500 66 L22 74 L25 70 C27 69 27 71 26 73 L22 82 C20 84 13 85 10 83 Z" />
        <path d="M5 91 L20 104 M19 91 L5 105 M4 94 V90 H8 M16 90 H20 V94 M4 101 V105 H8" strokeWidth="1.500" />
        <circle cx="20" cy="104" r="5" fill="#444" />
        <path d="M24 108 L28 112" strokeWidth="2.500" />
        <path d="M14 119 H19 L16.500 122 Z" fill="#303030" />
        <path d="M13 148 V132 H11 L15.500 127 L20 132 H18 V148 Z" />
        <path d="M12 137 C2 138 2 143 12 144 M19 137 C30 138 30 144 16 145 M9 140 V147 L4 144" />
        <path d="M14 157 H19 L16.500 160 Z" fill="#303030" />
        <path d="M0 164.500 H32" stroke="#555" />
        <path d="M4.500 169.500 h6 v6 h-6 Z M12.500 169.500 h6 v6 h-6 Z M20.500 169.500 h6 v6 h-6 Z M4.500 178.500 h16 v13 h-16 Z" />
        <path d="M9 181 L16 185 L9 189 Z" fill="#303030" />
        <circle cx="26" cy="206" r="3" />
      </svg>
    </div>
  );
}

function CommandLine() {
  return (
    <div className="absolute inset-x-0 bottom-0 mx-auto flex h-[27px] w-[60%] rounded-t-[2px] bg-[#252b35]">
      <span className="flex w-14 shrink-0 items-center pl-1">
        <svg width="50" height="20" fill="none" aria-hidden="true">
          <path d="M1 2 V18 M3.500 2 V18 M6 2 V18" stroke="#b4b9c1" strokeDasharray="1.500 1.500" strokeWidth="1.200" />
          <path d="M11 6 L18 13 M18 6 L11 13" stroke="#b4b9c1" strokeWidth="2" />
          <path d="M32 16 L40 8" stroke="#b4b9c1" strokeWidth="2.500" />
          <path d="M38 9 C36 5 40 3 41 4 L40 7 L42 8 L44 6 C46 9 42 11 40 10 Z" fill="#b4b9c1" />
        </svg>
      </span>
      <label className="my-px flex flex-1 items-center rounded-r-[2px] bg-[#b3b3b3] pl-1">
        <svg width="26" height="14" fill="none" aria-hidden="true">
          <path d="M0.500 1.500 H15.500 V12.500 H0.500 Z" stroke="#3f3f3f" />
          <path d="M0 1 H16 V4 H0 Z" fill="#4f4f4f" />
          <path d="M3 6 L5.500 8 L3 10 M7 10.500 H10" stroke="#3f3f3f" />
          <path d="M18 5 H25 L21.500 9 Z" fill="#3f3f3f" />
        </svg>
        <input
          type="text"
          aria-label="命令行"
          placeholder="键入命令"
          className="h-full min-w-0 flex-1 bg-transparent pb-0.5 pl-[7px] text-[13px] italic outline-none placeholder:text-[#5a5a5a]"
        />
        <svg width="8" height="5" className="mr-[3px]" aria-hidden="true"><path d="M0 4 H8 L4 0 Z" fill="#3f3f3f" /></svg>
      </label>
    </div>
  );
}

function Canvas() {
  return (
    <main className="relative flex-1 overflow-hidden bg-black">
      <button type="button" className="absolute top-[5px] left-[3px] text-[#e0e0e0]">[−][俯视][二维线框]</button>
      <div className="absolute top-[9px] right-2.5 flex gap-[9px]">
        <button type="button" aria-label="最小化图形">
          <svg width="11" height="11" aria-hidden="true"><path d="M0 8 H10" stroke="#fff" strokeWidth="3" /></svg>
        </button>
        <button type="button" aria-label="还原图形">
          <svg width="11" height="11" fill="none" aria-hidden="true"><path d="M1 3.500 H7.500 V9.500 H1 Z" stroke="#fff" strokeWidth="2" /><path d="M2 0.500 H10 V8" stroke="#fff" /></svg>
        </button>
        <button type="button" aria-label="关闭图形">
          <svg width="11" height="11" aria-hidden="true"><path d="M1 1.500 L9 9.500 M9 1.500 L1 9.500" stroke="#fff" strokeWidth="2.200" /></svg>
        </button>
      </div>
      <svg className="absolute top-[313px] left-[577px]" width="385" height="385" fill="none" stroke="#e8e8e4" aria-hidden="true">
        <path d="M192.500 0 V189 M192.500 196 V385 M0 192.500 H189 M196 192.500 H385" strokeWidth="1" />
        <rect x="189.500" y="189.500" width="6" height="6" />
      </svg>
      <svg className="absolute bottom-4 left-[15px]" width="72" height="73" fill="none" stroke="#fff" aria-hidden="true">
        <path d="M5.500 18 V68.500 H54 M1.500 63.500 h9 v9 h-9 Z" />
        <path d="M6.500 1 L12.500 7 L18.500 1 M12.500 7 V14 M57.500 54 L70 67 M70 54 L57.500 67" strokeWidth="1.200" />
      </svg>
      <ViewCube />
      <NavBar />
      <CommandLine />
    </main>
  );
}

function LayoutTabs() {
  const shape = "[clip-path:polygon(0_0,100%_0,calc(100%-6px)_85%,calc(100%-9px)_100%,9px_100%,6px_85%)]";
  return (
    <div className="flex h-[18px] shrink-0 border-t border-[#454e5c] pl-[11px] text-[#b9bec6]" role="tablist">
      <button type="button" role="tab" aria-selected="true" className={`w-[47px] bg-[#3b4453] leading-[17px] font-bold text-white ${shape}`}>模型</button>
      <button type="button" role="tab" aria-selected="false" className={`ml-0.5 w-[52px] bg-[#2e3643] leading-[17px] ${shape}`}>布局1</button>
      <button type="button" role="tab" aria-selected="false" className={`ml-0.5 w-[53px] bg-[#2e3643] leading-[17px] ${shape}`}>布局2</button>
      <button type="button" aria-label="新建布局" className={`ml-[3px] flex w-6 items-center justify-center bg-[#2e3643] ${shape}`}>
        <svg width="8" height="8" aria-hidden="true"><path d="M4 0 V8 M0 4 H8" stroke="#b9bec6" strokeWidth="2" /></svg>
      </button>
    </div>
  );
}

type Cell = { icon: string; label: string; on?: boolean; arrow?: boolean };

function StatusGroup({ cells, children }: { cells: Cell[]; children?: ReactNode }) {
  return (
    <div className="flex shrink-0 bg-[#3b4453]">
      {cells.map((c) => (
        <React.Fragment key={c.icon}>
          <button
            type="button"
            aria-label={c.label}
            aria-pressed={!!c.on}
            className={`flex h-6 w-[25px] items-center justify-center border-r border-[#333c49] ${c.on ? "bg-[#5889c4]" : ""}`}
          >
            <Icon name={c.icon} />
          </button>
          {c.arrow && (
            <button type="button" aria-label={`${c.label}设置`} className="flex h-6 w-3.5 items-center justify-center">
              <Caret size={6} />
            </button>
          )}
        </React.Fragment>
      ))}
      {children}
    </div>
  );
}

function StatusBar() {
  return (
    <footer className="mt-1 mb-1 flex h-6 shrink-0 justify-end gap-[3px] text-[#eceef2]">
      <output className="flex w-[180px] items-center justify-end bg-[#3b4453] pr-[5px]">890.6652, 447.8252, 0.0000</output>
      <button type="button" className="w-[27px] bg-[#3b4453] font-medium whitespace-nowrap">模型</button>
      <StatusGroup cells={[{ icon: "grid", label: "栅格" }, { icon: "snap", label: "捕捉模式", arrow: true }]} />
      <StatusGroup
        cells={[
          { icon: "infer", label: "推断约束" },
          { icon: "dyn", label: "动态输入", on: true },
          { icon: "ortho", label: "正交" },
          { icon: "polar", label: "极轴追踪", on: true, arrow: true },
          { icon: "iso", label: "等轴测草图", arrow: true },
          { icon: "otrack", label: "对象捕捉追踪", on: true },
          { icon: "osnap", label: "对象捕捉", on: true, arrow: true },
          { icon: "lwdisp", label: "显示线宽" },
          { icon: "transp", label: "透明度", on: true },
          { icon: "cycle", label: "选择循环" },
          { icon: "osnap3d", label: "三维对象捕捉", arrow: true },
        ]}
      />
      <StatusGroup
        cells={[
          { icon: "ducs", label: "动态 UCS", on: true },
          { icon: "subobj", label: "选择过滤", arrow: true },
          { icon: "gizmo", label: "小控件", on: true, arrow: true },
        ]}
      />
      <StatusGroup
        cells={[
          { icon: "ann1", label: "注释可见性", on: true },
          { icon: "ann2", label: "自动缩放" },
          { icon: "ann3", label: "注释比例" },
        ]}
      >
        <button type="button" className="flex w-[69px] items-center justify-between pr-1 pl-0.5 whitespace-nowrap">
          1:1 / 100%
          <Caret size={6} />
        </button>
      </StatusGroup>
      <StatusGroup cells={[{ icon: "gear", label: "切换工作空间", arrow: true }, { icon: "plus", label: "注释监视器" }]} />
      <StatusGroup cells={[{ icon: "ruler", label: "单位" }]}>
        <label className="flex w-[72px] items-center pr-1 pl-1">
          <select aria-label="单位格式" className="min-w-0 flex-1 appearance-none bg-transparent font-medium outline-none">
            <option>小数</option>
          </select>
          <Caret size={6} />
        </label>
        <span className="border-l border-[#2a323f]"><StatusGroup cells={[{ icon: "qprops", label: "快捷特性" }]} /></span>
      </StatusGroup>
      <StatusGroup
        cells={[
          { icon: "lockui", label: "锁定用户界面", arrow: true },
          { icon: "isolate", label: "隔离对象" },
          { icon: "hw", label: "图形性能", on: true },
        ]}
      />
      <StatusGroup cells={[{ icon: "clean", label: "全屏显示" }, { icon: "menu", label: "自定义" }]} />
    </footer>
  );
}

export default function App() {
  return (
    <div className="relative flex h-screen flex-col overflow-hidden bg-[#222933] font-['Noto_Sans','Noto_Sans_CJK_SC',sans-serif] text-xs leading-4 text-[#e4e7ec]">
      <AppButton />
      <TitleBar />
      <div className="mx-px flex min-h-0 flex-1 flex-col border-x-[3px] border-b-[3px] border-[#3b4453]">
        <RibbonTabs />
        <Ribbon />
        <DocTabs />
        <div className="ml-px flex min-h-0 flex-1 flex-col border-t-[5px] border-r-4 border-[#3b4453]">
          <Canvas />
        </div>
        <LayoutTabs />
        <StatusBar />
      </div>
    </div>
  );
}
